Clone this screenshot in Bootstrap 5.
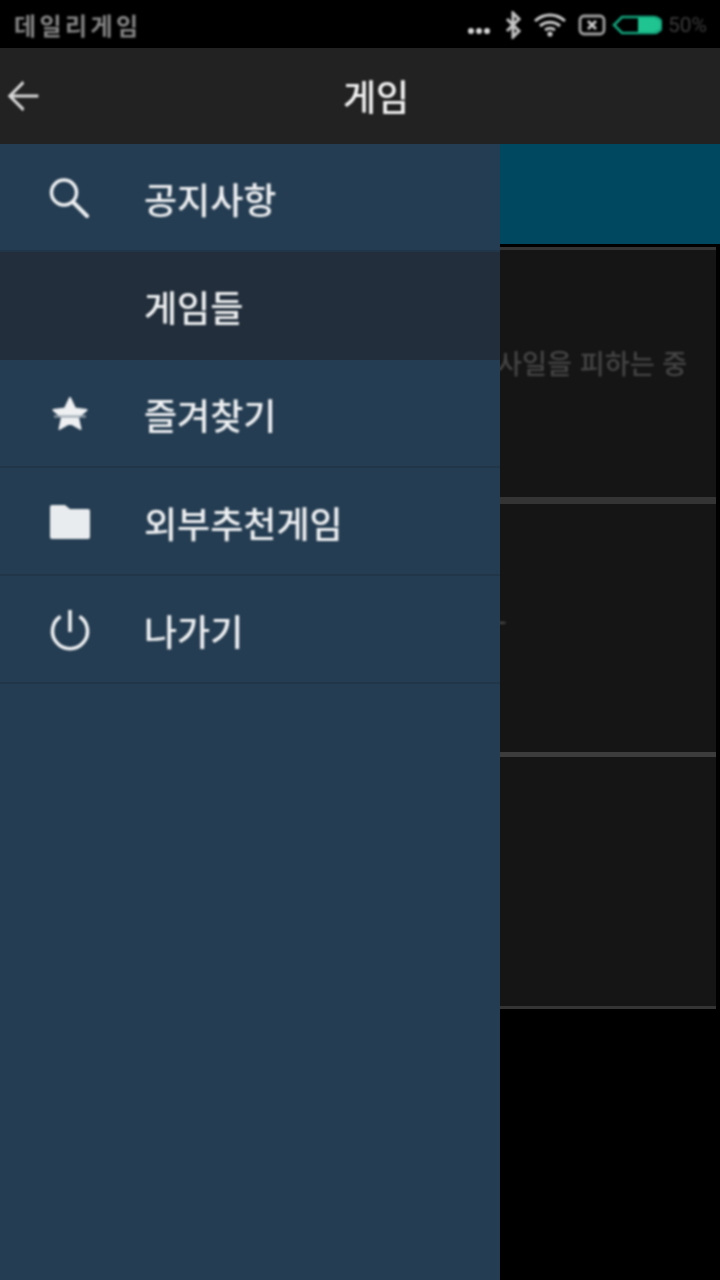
<!DOCTYPE html>
<html lang="ko">
<head>
    <meta charset="UTF-8">
    <meta name="viewport" content="width=device-width, initial-scale=1.0">
    <title>게임</title>
    <link href="https://cdn.jsdelivr.net/npm/bootstrap@5.3.0/dist/css/bootstrap.min.css" rel="stylesheet">
    <script src="https://cdn.jsdelivr.net/npm/bootstrap@5.3.0/dist/js/bootstrap.bundle.min.js"></script>
    <style>
        html, body { height: 100%; }
        body { background: #000; font-family: "Noto Sans CJK KR", "Noto Sans", sans-serif; overflow: hidden; }
        .app-shell { width: 720px; height: 1280px; }
        .app-shell svg, .app-shell span, .card-desc { filter: blur(.8px); }
        .status-bar { height: 48px; background: #000; padding: 2px 13px 0 14px; }
        .status-title { font-size: 24px; font-weight: 700; color: #858585; letter-spacing: 3.4px; line-height: 1; }
        .status-pct { font-size: 21px; color: #3a3a3a; line-height: 1; font-family: "Roboto", sans-serif; margin-left: 6px; }
        .status-dots { margin-top: 12px; }
        .status-gap-a { margin-left: 11px; }
        .status-gap-b { margin-left: 12px; }
        .status-gap-c { margin-left: 6px; }
        .app-bar { height: 96px; background: #222; padding-left: 32px; }
        .back-icon { left: 0; top: 25px; }
        .app-title { font-size: 36px; font-weight: 500; color: #f2f2f2; line-height: 1; margin-top: -2px; }
        .content-area { height: 1136px; }
        .teal-band { height: 100px; background: #004860; }
        .game-card { background: #151515; margin-right: 4px; border-style: solid; border-width: 0; border-color: #343434; }
        .card-one { margin-top: 3px; height: 250px; border-top-width: 3px; padding-top: 93px; }
        .card-two { height: 255px; border-top-width: 7px; padding-top: 98px; }
        .card-three { height: 257px; border-top-width: 5px; border-bottom-width: 3px; border-top-color: #3c3c3c; }
        .card-desc { font-size: 27.2px; font-weight: 500; color: #454545; line-height: 38px; white-space: nowrap; padding-left: 497px; }
        .drawer { left: 0; top: 0; width: 500px; height: 1136px; background: #253d52; }
        .drawer-row { height: 108px; padding-top: 2px; border-bottom: 2px solid #213749; color: #eef0f2; font-size: 36px; font-weight: 500; line-height: 1; }
        .drawer-row.is-current { background: #222e3b; border-bottom-color: #222e3b; }
        .icon-slot { width: 144px; padding-left: 46px; flex: none; line-height: 0; }
    </style>
</head>
<body>
    <div class="app-shell">
        <div class="status-bar d-flex align-items-center">
            <span class="status-title">데일리게임</span>
            <div class="ms-auto d-flex align-items-center">
                <svg width="26" height="10" viewBox="0 0 26 10" class="status-dots"><g fill="#d8d8d8"><circle cx="4" cy="5" r="3"/><circle cx="12" cy="5" r="3"/><circle cx="20" cy="5" r="3"/></g></svg>
                <svg width="18" height="28" viewBox="0 0 18 28" fill="none" stroke="#c4c4c4" stroke-width="3" class="status-gap-a"><path d="M3 8l12 12-6 6V2l6 6L3 20"/></svg>
                <svg width="32" height="26" viewBox="0 0 32 26" fill="none" stroke="#c8c8c8" stroke-width="3" class="status-gap-b"><path d="M1 9c9-8 21-8 30 0M6 14c6-5 14-5 20 0M11 18c3-2 7-2 10 0"/><circle cx="16" cy="22" r="2.6" fill="#c8c8c8" stroke="none"/></svg>
                <svg width="28" height="22" viewBox="0 0 28 22" fill="none" stroke="#a0a0a0" stroke-width="2.8" class="status-gap-b"><rect x="2" y="2" width="24" height="18" rx="4"/><path d="M10 7l8 8M18 7l-8 8" stroke="#c8c8c8"/></svg>
                <svg width="50" height="20" viewBox="0 0 50 20" class="status-gap-c"><path d="M10 2h32a8 8 0 0 1 0 16H10L2 10z" fill="none" stroke="#13a57c" stroke-width="2.6"/><path d="M26 3h16a7 7 0 0 1 0 14H26z" fill="#1fc490"/></svg>
                <span class="status-pct">50%</span>
            </div>
        </div>

        <div class="app-bar position-relative d-flex align-items-center justify-content-center">
            <svg class="back-icon position-absolute" width="46" height="46" viewBox="0 0 24 24" fill="#d9d9d9"><path d="M20 11.200H7l5.600-5.600L11.900 4 4 12l7.900 8 .8-1.600L7 12.800h13z"/></svg>
            <span class="app-title">게임</span>
        </div>

        <div class="content-area position-relative">
            <div class="teal-band"></div>
            <div class="game-card card-one"><div class="card-desc">사일을 피하는 중</div></div>
            <div class="game-card card-two"><div class="card-desc">-</div></div>
            <div class="game-card card-three"></div>

            <div class="drawer position-absolute">
                <div class="drawer-row d-flex align-items-center">
                    <div class="icon-slot"><svg width="48" height="48" viewBox="0 0 48 48" fill="none" stroke="#eef0f2"><circle cx="18" cy="18.500" r="12.500" stroke-width="3.500"/><path d="M27 28l14 14" stroke-width="4" stroke-linecap="round"/></svg></div>
                    <span>공지사항</span>
                </div>
                <div class="drawer-row is-current d-flex align-items-center">
                    <div class="icon-slot"></div>
                    <span>게임들</span>
                </div>
                <div class="drawer-row d-flex align-items-center">
                    <div class="icon-slot"><svg width="48" height="48" viewBox="0 0 48 48"><path d="M24 8l5 10.500 11.500 1.500-8.500 7.500 2.500 11.500L24 33l-10.500 6 2.500-11.500L7.500 20 19 18.500z" fill="#eef0f2" stroke="#eef0f2" stroke-width="2" stroke-linejoin="round"/><path d="M8 26.500h32" stroke="#9aa6b0" stroke-width="2"/></svg></div>
                    <span>즐겨찾기</span>
                </div>
                <div class="drawer-row d-flex align-items-center">
                    <div class="icon-slot"><svg width="48" height="48" viewBox="0 0 48 48" fill="#e9ecef"><path d="M19 7H6a2 2 0 0 0-2 2v30a2 2 0 0 0 2 2h36a2 2 0 0 0 2-2V13a2 2 0 0 0-2-2H24z"/></svg></div>
                    <span>외부추천게임</span>
                </div>
                <div class="drawer-row d-flex align-items-center">
                    <div class="icon-slot"><svg width="48" height="48" viewBox="0 0 48 48" fill="none" stroke="#eef0f2" stroke-width="3.600"><path d="M24 4v22"/><path d="M14.500 10.500a17.500 17.500 0 1 0 19 0"/></svg></div>
                    <span>나가기</span>
                </div>
            </div>
        </div>
    </div>
</body>
</html>
